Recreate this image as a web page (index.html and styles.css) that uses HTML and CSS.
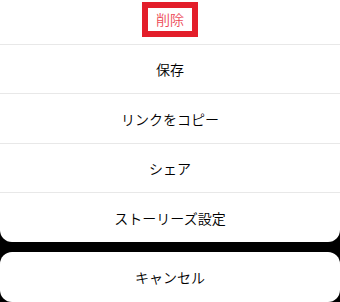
FILE: index.html
```html
<!DOCTYPE html>
<html lang="ja">
  <head>
    <meta charset="UTF-8" />
    <meta name="viewport" content="width=device-width, initial-scale=1.0" />
    <title>メニュー</title>
    <link rel="stylesheet" href="styles.css">
  </head>
  <body>
    <div class="sheet menu">
      <div class="item danger"><span class="highlight">削除</span></div>
      <div class="item">保存</div>
      <div class="item tall">リンクをコピー</div>
      <div class="item">シェア</div>
      <div class="item last">ストーリーズ設定</div>
    </div>

    <div class="sheet cancel">
      <div class="item last">キャンセル</div>
    </div>
  </body>
</html>
```

FILE: styles.css
```css
html,
body {
  margin: 0;
  padding: 0;
  background-color: #000;
  font-family: "Noto Sans CJK JP", "Noto Sans", sans-serif;
  font-size: 14px;
  font-weight: 350;
  color: #000;
}

body {
  height: 302px;
  overflow: hidden;
}

.sheet {
  background-color: #fff;
  border-radius: 12px;
}

.menu {
  margin-top: -5px;
  border-top-left-radius: 0;
  border-top-right-radius: 0;
}

.cancel {
  margin-top: 10px;
}

.item {
  height: 48px;
  display: flex;
  align-items: center;
  justify-content: center;
  border-bottom: 1px solid #e8e8e8;
}

.item.danger {
  height: 49px;
  color: #ed4956;
}

.item.tall {
  height: 49px;
}

.item.last {
  height: 49px;
  border-bottom: none;
}

.cancel .item.last {
  height: 50px;
}

.highlight {
  display: inline-block;
  padding: 0 8px;
  line-height: 23px;
  border: 6px solid #e31e2a;
}
```
